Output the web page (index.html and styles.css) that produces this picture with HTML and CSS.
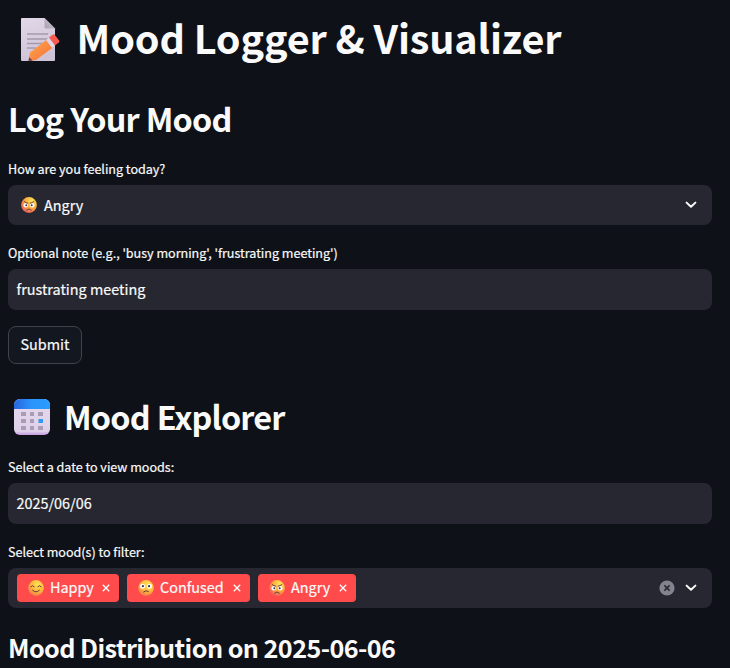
FILE: index.html
```html
<!DOCTYPE html>
<html lang="en">
<head>
<meta charset="utf-8">
<title>Mood Logger &amp; Visualizer</title>
<link rel="stylesheet" href="styles.css">
</head>
<body>
<svg class="defs" width="0" height="0" aria-hidden="true">
  <defs>
    <radialGradient id="face" cx=".62" cy=".3" r=".75"><stop offset="0" stop-color="#ffe35a"/><stop offset=".55" stop-color="#fdb83b"/><stop offset="1" stop-color="#ee7650"/></radialGradient>
    <radialGradient id="rage" cx=".68" cy=".25" r=".85"><stop offset="0" stop-color="#ffe45e"/><stop offset=".5" stop-color="#fdac38"/><stop offset="1" stop-color="#ed5361"/></radialGradient>
    <linearGradient id="paper" x1="0" y1="0" x2=".3" y2="1"><stop offset="0" stop-color="#e2d8e8"/><stop offset="1" stop-color="#cfc3d8"/></linearGradient>
    <linearGradient id="fold" x1="0" y1="1" x2="1" y2="0"><stop offset="0" stop-color="#aaa1b1"/><stop offset="1" stop-color="#cec5d3"/></linearGradient>
    <linearGradient id="wood" x1="0" y1="0" x2="1" y2="1"><stop offset="0" stop-color="#ffae4e"/><stop offset="1" stop-color="#f56b38"/></linearGradient>
    <linearGradient id="sky"><stop offset="0" stop-color="#2866df"/><stop offset=".5" stop-color="#2a95fb"/><stop offset="1" stop-color="#2b9cff"/></linearGradient>
    <linearGradient id="sheet" x1="0" y1="0" x2="0" y2="1"><stop offset="0" stop-color="#e5d9ec"/><stop offset=".9" stop-color="#dfd0e9"/><stop offset="1" stop-color="#c49be0"/></linearGradient>
    <symbol id="angry" viewBox="0 0 16 16">
      <circle cx="8" cy="8" r="7.9" fill="url(#rage)"/>
      <circle cx="4.8" cy="8.3" r="2.3" fill="#fff"/><circle cx="11.2" cy="8.3" r="2.3" fill="#fff"/>
      <circle cx="5.3" cy="8.3" r="1" fill="#46303d"/><circle cx="10.7" cy="8.3" r="1" fill="#46303d"/>
      <path d="M3.2 4.6Q4.800 6.100 6.800 6.200M12.800 4.600Q11.200 6.100 9.200 6.200M5.600 13.100Q8 10.600 10.400 13.100" fill="none" stroke="#593445" stroke-width=".9" stroke-linecap="round"/>
    </symbol>
    <symbol id="happy" viewBox="0 0 16 16">
      <circle cx="8" cy="8" r="7.9" fill="url(#face)"/>
      <path d="M2.8 6.7Q4.6 4.4 6.3 6.7M9.7 6.7Q11.4 4.4 13.2 6.7M4.6 10.2Q8 13.6 11.4 10.2" fill="none" stroke="#643b3c" stroke-width="1" stroke-linecap="round"/>
    </symbol>
    <symbol id="confused" viewBox="0 0 16 16">
      <circle cx="8" cy="8" r="7.9" fill="url(#face)"/>
      <circle cx="4.5" cy="6.2" r="2.5" fill="#fff"/><circle cx="11.5" cy="6.2" r="2.5" fill="#fff"/>
      <circle cx="4.9" cy="6.2" r="1.1" fill="#46303d"/><circle cx="11.1" cy="6.2" r="1.1" fill="#46303d"/>
      <path d="M5.6 11.9Q8 9.7 10.4 11.4" fill="none" stroke="#643b3c" stroke-width="1" stroke-linecap="round"/>
    </symbol>
    <symbol id="cross" viewBox="0 0 8 8"><path d="M.8.8l6.4 6.4M7.2.8L.8 7.2" fill="none" stroke="#fff" stroke-width="1.3"/></symbol>
    <symbol id="chevron" viewBox="0 0 12 8"><path d="M1.6 1.6L6 5.8l4.4-4.2" fill="none" stroke="#fafafa" stroke-width="2" stroke-linecap="round" stroke-linejoin="round"/></symbol>
  </defs>
</svg>
<main class="page">
  <h1 class="title">
    <svg class="memo" viewBox="0 0 40 44">
      <path d="M2 0h22.500L35 10.500V42a1 1 0 0 1-1 1H2a1 1 0 0 1-1-1V1a1 1 0 0 1 1-1z" fill="url(#paper)"/>
      <path d="M24.500 0L35 10.500h-9a1.500 1.500 0 0 1-1.500-1.500z" fill="url(#fold)"/>
      <path d="M7 16h21M7 21h21M7 25.500h15M7 30h9" stroke="#a39bab" stroke-width="1.500"/>
      <path d="M8.500 43l1.500-8.500L27.500 21l6 8-17.500 13z" fill="url(#wood)"/>
      <path d="M8.500 43l.6-3.800 3.700 3.400z" fill="#684052"/>
      <path d="M26 22l3-2.500 6 8-3 2.500z" fill="#ded7ed"/>
      <path d="M29 19.500l3.800-2.900a1.500 1.500 0 0 1 2 .3l4.300 5.700a1.500 1.500 0 0 1-.3 2L35 27.500z" fill="#f95a50"/>
    </svg>
    <span class="title-text">Mood Logger &amp; Visualizer</span>
  </h1>
  <h2 class="heading log">Log Your Mood</h2>
  <div class="label l1">How are you feeling today?</div>
  <div class="field select"><svg class="emoji"><use href="#angry"/></svg><span class="value">Angry</span><svg class="chevron"><use href="#chevron"/></svg></div>
  <div class="label l2">Optional note (e.g., 'busy morning', 'frustrating meeting')</div>
  <div class="field input"><span class="value">frustrating meeting</span></div>
  <button class="submit" type="button">Submit</button>
  <h2 class="heading explorer">
    <svg class="calendar" viewBox="0 0 36 36">
      <rect width="36" height="36" rx="6" fill="url(#sheet)"/>
      <path d="M0 10V6a6 6 0 0 1 6-6h24a6 6 0 0 1 6 6v4z" fill="url(#sky)"/>
      <path d="M7 13h5v4H7zM16 13h4v4h-4zM24 13h5v4h-5zM7 20h5v4H7zM16 20h4v4h-4zM7 27h5v4H7zM16 27h4v4h-4zM24 27h5v4h-5z" fill="#a79db4"/>
      <path d="M24.500 20h4.500v4h-4.500z" fill="#3298f3"/>
    </svg>
    <span class="heading-text">Mood Explorer</span>
  </h2>
  <div class="label l3">Select a date to view moods:</div>
  <div class="field input"><span class="value">2025/06/06</span></div>
  <div class="label l4">Select mood(s) to filter:</div>
  <div class="field tags">
    <span class="tag happy"><svg class="emoji"><use href="#happy"/></svg><span class="value">Happy</span><svg class="cross"><use href="#cross"/></svg></span>
    <span class="tag confused"><svg class="emoji"><use href="#confused"/></svg><span class="value">Confused</span><svg class="cross"><use href="#cross"/></svg></span>
    <span class="tag angry"><svg class="emoji"><use href="#angry"/></svg><span class="value">Angry</span><svg class="cross"><use href="#cross"/></svg></span>
    <svg class="clear" viewBox="0 0 16 16"><circle cx="8" cy="8" r="7.6" fill="#81838f"/><path d="M5.400 5.400l5.200 5.200M10.600 5.400l-5.200 5.200" stroke="#262730" stroke-width="1.500"/></svg>
    <svg class="chevron"><use href="#chevron"/></svg>
  </div>
  <h3 class="subheading">Mood Distribution on 2025-06-06</h3>
</main>
</body>
</html>
```
FILE: styles.css
```css
* { box-sizing: border-box; }
body {
  margin: 0;
  background: #0e1117;
  color: #fafafa;
  font-family: "Noto Sans CJK SC", "Open Sans", sans-serif;
  overflow: hidden;
}
svg { display: block; flex: none; }
.defs { position: absolute; }
.page {
  width: 712px;
  height: 668px;
  padding-left: 8px;
  display: flex;
  flex-direction: column;
  overflow: hidden;
}
h1, h2, h3 { margin: 0; flex: none; display: flex; align-items: center; white-space: nowrap; }
.title { height: 80px; font-size: 39.6px; font-weight: 700; line-height: 80px; letter-spacing: -0.13px; }
.title-text { padding-bottom: 6px; line-height: 74px; }
.memo { width: 40px; height: 44px; margin: 0 16.500px 1px 12px; }
.heading { font-size: 32.4px; font-weight: 600; letter-spacing: -0.85px; word-spacing: 0.5px; }
.log { height: 80px; padding-bottom: 6px; }
.label {
  flex: none;
  height: 25px;
  font-size: 12.6px;
  line-height: 18px;
  letter-spacing: -0.03px;
  white-space: nowrap;
  -webkit-text-stroke: 0.2px;
}
.field {
  flex: none;
  height: 40px;
  border-radius: 8px;
  background: #262730;
  display: flex;
  align-items: center;
  font-size: 14.4px;
}
.value { line-height: 20px; white-space: nowrap; -webkit-text-stroke: 0.2px; }
.emoji { width: 16px; height: 16px; }
.chevron { width: 12px; height: 8px; margin-left: auto; margin-right: 15px; }
.select { padding-left: 13px; gap: 7px; }
.l2 { margin-top: 19px; }
.input { height: 41px; padding: 0 0 2px 8.5px; }
.submit {
  flex: none;
  width: 74px;
  height: 38px;
  margin-top: 16px;
  padding: 0 0 2px;
  border: 1px solid #41434b;
  border-radius: 8px;
  background: #131720;
  color: #fafafa;
  font: 14.4px/20px "Noto Sans CJK SC", "Open Sans", sans-serif;
  -webkit-text-stroke: 0.2px;
}
.explorer { height: 94px; padding-top: 12px; }
.heading-text { padding-bottom: 4px; }
.calendar { width: 36px; height: 36px; margin: 0 14px 0 6px; }
.l4 { margin-top: 19px; }
.tags { padding-left: 9px; gap: 8px; }
.tag { flex: none; height: 28px; border-radius: 4px; background: #ff4b4b; display: flex; align-items: center; padding-left: 11px; }
.happy { width: 102px; }
.confused { width: 123px; }
.angry { width: 98px; }
.tag .emoji { margin-bottom: 1px; }
.tag .value { margin-left: 6px; padding-bottom: 2px; }
.cross { width: 8px; height: 8px; margin-left: auto; margin-right: 9px; }
.clear { width: 16px; height: 16px; margin-left: auto; }
.clear + .chevron { margin-left: 2px; }
.subheading { height: 60px; margin-top: 11px; padding-bottom: 4px; font-size: 25.2px; font-weight: 600; letter-spacing: -0.57px; }
```
